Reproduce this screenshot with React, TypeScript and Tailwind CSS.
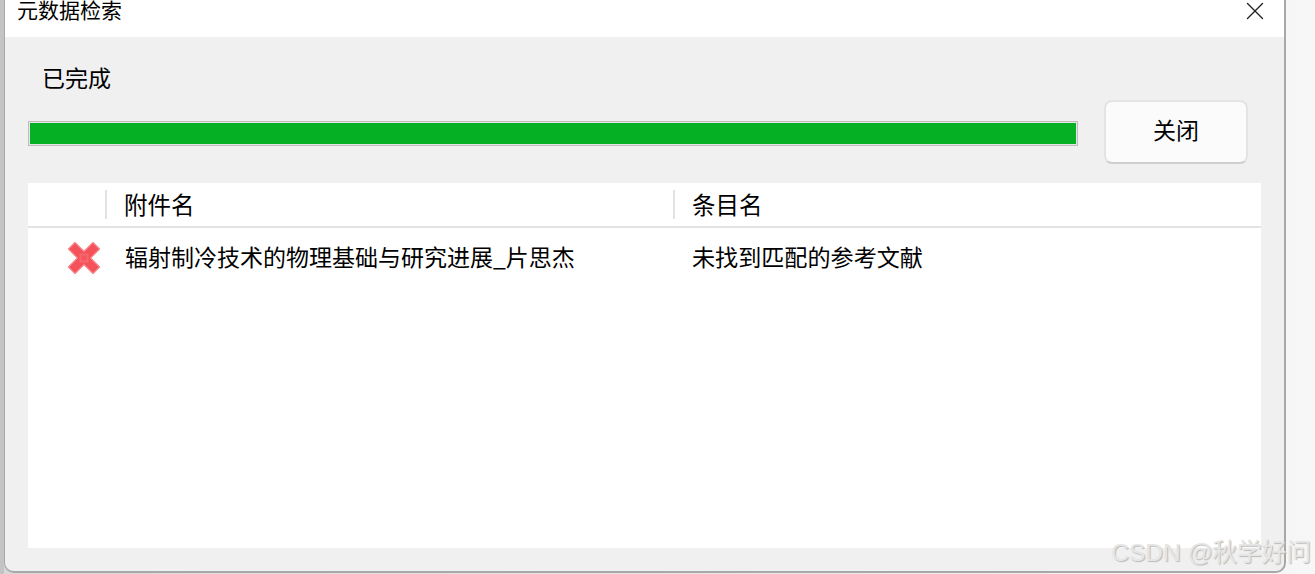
import { X } from "lucide-react";

const font = { fontFamily: '"Noto Sans CJK SC", "Liberation Sans", sans-serif' };

function FailIcon() {
	return (
		<svg width="34" height="34" viewBox="0 0 34 34" className="shrink-0">
			<path
				d="M8 1.5 17 10.5 26 1.5 32.5 8 23.5 17 32.5 26 26 32.5 17 23.5 8 32.5 1.5 26 10.5 17 1.5 8Z"
				fill="#f4525a"
				stroke="#f98085"
				strokeWidth="1.2"
				strokeLinejoin="round"
			/>
			<rect x="12.5" y="12.5" width="9" height="9" fill="#f6666c" />
			<rect x="14.5" y="14.5" width="5" height="5" fill="#f4565d" />
		</svg>
	);
}

export default function App() {
	return (
		<div
			className="relative flex h-[574px] w-[1315px] overflow-hidden bg-gradient-to-r from-[#d8d8d8] to-[#f7f7f7] text-[23px] text-black"
			style={font}
		>
			<div className="w-[4px] shrink-0 bg-[#c4c4c4]" />
			<div className="flex h-[573px] w-[1282px] shrink-0 flex-col overflow-hidden rounded-b-[10px] border-r-2 border-b-2 border-l border-[#a8a8a8] bg-[#f0f0f0]">
				<header className="flex h-[37px] shrink-0 items-center justify-between bg-white pr-[14px] pl-[12px]">
					<span className="-mt-[18px] text-[21px] leading-[19px]">元数据检索</span>
					<X className="-mt-[15px] text-[#222]" size={30} strokeWidth={1.1} />
				</header>
				<main className="flex min-h-0 flex-1 flex-col pt-[27px] pr-[23px] pb-[23px] pl-[23px]">
					<div className="flex h-[100px] shrink-0 justify-between pr-[13px]">
						<div className="flex w-[1050px] flex-col">
							<span className="h-[30px] pl-[14px] leading-[26px]">已完成</span>
							<div className="mt-[27px] h-[25px] border border-[#bcbcbc] bg-[#e6e6e6] p-px">
								<div className="h-full w-full bg-[#06b025]" />
							</div>
						</div>
						<button className="mt-[36px] h-[64px] w-[144px] rounded-[8px] border-2 border-[#e4e4e4] border-b-[#cfcfcf] bg-[#fbfbfb] pb-[5px] text-[23px]">
							关闭
						</button>
					</div>
					<section className="mt-[19px] flex min-h-0 flex-1 flex-col bg-white">
						<div className="flex h-[45px] shrink-0 items-start border-b-2 border-[#e3e3e3] pt-[7px] text-[23.5px]">
							<div className="h-[29px] w-[79px] shrink-0 border-r-2 border-[#e3e3e3]" />
							<div className="h-[29px] w-[568px] shrink-0 border-r-2 border-[#e3e3e3] pl-[17px] leading-[28px]">
								附件名
							</div>
							<div className="pl-[17px] leading-[28px]">条目名</div>
						</div>
						<div className="flex h-[60px] items-center">
							<div className="flex w-[79px] shrink-0 justify-end pr-[6px]">
								<FailIcon />
							</div>
							<div className="w-[568px] shrink-0 pb-[4px] pl-[18px] whitespace-nowrap">
								辐射制冷技术的物理基础与研究进展_片思杰
							</div>
							<div className="pb-[4px] pl-[17px] text-[23.1px] whitespace-nowrap">未找到匹配的参考文献</div>
						</div>
					</section>
				</main>
			</div>
			<span className="absolute right-[4px] bottom-[6px] text-[24.6px] leading-[30px] text-[#e6e6e6] [font-family:'Liberation_Sans','Noto_Sans_CJK_SC',sans-serif] [text-shadow:1px_1px_1px_#b8b8b8]">
				CSDN @秋学好问
			</span>
		</div>
	);
}
